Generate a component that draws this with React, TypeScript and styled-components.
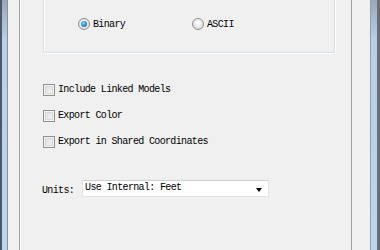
import React from "react";
import styled, { createGlobalStyle } from "styled-components";

const Global = createGlobalStyle`
  html, body { margin: 0; padding: 0; overflow: hidden; background: #f0f0f0; }
  * { box-sizing: border-box; }
`;

const Frame = styled.div`
  display: flex;
  width: 380px;
  height: 250px;
  border-left: 2px solid #4d5866;
  border-right: 3px solid #6a6f76;
  background: linear-gradient(180deg, #9aa8b8 0px, #b8d0ea 40px, #bcd6f0 100%);
  padding: 0 6px 0 5px;
`;

const Client = styled.div`
  flex: 1;
  display: flex;
  background: #f0f0f0;
  border-left: 1px solid #8c9096;
  border-right: 1px solid #9a9ea4;
  padding: 0 18px 0 11px;
`;

const Panel = styled.div`
  flex: 1;
  display: flex;
  flex-direction: column;
  border-left: 1px solid #a0a0a0;
  border-right: 1px solid #a0a0a0;
  box-shadow: inset 1px 0 0 #ffffff;
  font-family: "Liberation Mono", "DejaVu Sans Mono", monospace;
  font-size: 10px;
  letter-spacing: -0.65px;
  color: #000;
`;

const Group = styled.div`
  margin: 0 16px 0 23px;
  height: 53px;
  border: 1px solid #d5dfe5;
  border-top: none;
  box-shadow: inset 1px 0 0 #ffffff, 1px 0 0 #ffffff, 0 1px 0 #ffffff;
  border-radius: 0 0 3px 3px;
  display: flex;
  align-items: flex-start;
  padding: 18px 0 0 34px;
`;

const RadioItem = styled.label<{ $width?: number }>`
  display: flex;
  align-items: center;
  gap: 3px;
  width: ${(p) => p.$width ?? 114}px;
  height: 12px;
`;

const RadioCircle = styled.span<{ $checked?: boolean }>`
  width: 12px;
  height: 12px;
  border-radius: 50%;
  border: 1px solid #8e8f8f;
  background: radial-gradient(circle at 50% 40%, #ffffff 0%, #e4e4e4 60%, #cfcfcf 100%);
  display: flex;
  align-items: center;
  justify-content: center;
  flex: none;
  &::after {
    content: "";
    display: ${(p) => (p.$checked ? "block" : "none")};
    width: 6px;
    height: 6px;
    border-radius: 50%;
    background: radial-gradient(circle at 40% 35%, #8fd2f5 0%, #2a8bd0 55%, #115a9a 100%);
  }
`;

const Checks = styled.div`
  display: flex;
  flex-direction: column;
  gap: 13px;
  padding: 30px 0 0 23px;
`;

const CheckRow = styled.label`
  display: flex;
  align-items: center;
  gap: 3px;
  height: 13px;
`;

const CheckBox = styled.span`
  width: 12px;
  height: 12px;
  flex: none;
  border: 1px solid #8e8f8f;
  background: #f4f4f4;
  box-shadow: inset 0 0 0 1px #f4f4f4, inset 0 0 0 2px #d8d8d8;
  background: linear-gradient(135deg, #d9d9d9 0%, #ececec 60%, #f8f8f8 100%);
`;

const UnitsRow = styled.div`
  display: flex;
  align-items: flex-end;
  gap: 8px;
  padding: 32px 0 0 22px;
`;

const UnitsLabel = styled.span`
  line-height: 12px;
  padding-bottom: 0;
`;

const Select = styled.div`
  width: 187px;
  height: 17px;
  background: #ffffff;
  border: 1px solid #e3e3e3;
  border-top-color: #d0d0d0;
  display: flex;
  align-items: center;
  justify-content: space-between;
  padding: 0 6px 2px 2px;
`;

const Arrow = styled.span`
  width: 0;
  height: 0;
  border-left: 3.5px solid transparent;
  border-right: 3.5px solid transparent;
  border-top: 4px solid #000;
  margin-top: 4px;
`;

export default function App() {
  return (
    <>
      <Global />
      <Frame>
        <Client>
          <Panel>
            <Group>
              <RadioItem $width={114}>
                <RadioCircle $checked />
                <span>Binary</span>
              </RadioItem>
              <RadioItem $width={60}>
                <RadioCircle />
                <span>ASCII</span>
              </RadioItem>
            </Group>
            <Checks>
              <CheckRow>
                <CheckBox />
                <span>Include Linked Models</span>
              </CheckRow>
              <CheckRow>
                <CheckBox />
                <span>Export Color</span>
              </CheckRow>
              <CheckRow>
                <CheckBox />
                <span>Export in Shared Coordinates</span>
              </CheckRow>
            </Checks>
            <UnitsRow>
              <UnitsLabel>Units:</UnitsLabel>
              <Select>
                <span>Use Internal: Feet</span>
                <Arrow />
              </Select>
            </UnitsRow>
          </Panel>
        </Client>
      </Frame>
    </>
  );
}
